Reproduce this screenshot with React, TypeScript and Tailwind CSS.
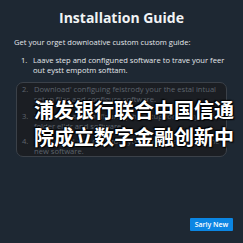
import React from "react";

export default function App() {
  const steps = [
    { n: "2.", text: "Download' configuing feistrody your the estal intual setup files and configure software." },
    { n: "3.", text: "Download and configuring the setup for the system folder elldr and software." },
    { n: "4.", text: "Then install and configure your custom setup for the new software." },
  ];

  return (
    <div
      className="relative w-[243px] h-[243px] overflow-hidden bg-[#1e2833] text-white"
      style={{ fontFamily: "'Open Sans', 'Noto Sans', sans-serif" }}
    >
      <h1 className="pt-[7px] text-center text-[14px] font-bold leading-[22px] text-[#f1f3f5]">
        Installation Guide
      </h1>
      <p className="mt-[8px] pl-[14px] text-[7.6px] leading-[10px] text-[#e4e7eb]">
        Get your orget downloative custom custom guide:
      </p>
      <div className="mt-[8px] flex pl-[21px] pr-[12px] text-[7.6px] leading-[10px] text-[#e4e7eb]">
        <span className="w-[12px] shrink-0">1.</span>
        <span>Laave step and configuned software to trave your feer out eystt empotm softtam.</span>
      </div>

      <div className="mx-[16px] mt-[7px] h-[75px] rounded-[7px] border border-[#3b4149] bg-[#1b1e23] pl-[5px] pr-[6px] pt-[1px]">
        {steps.map((s, i) => (
          <div
            key={s.n}
            className={"flex text-[7.6px] leading-[10px] text-[#5d646d] " + (i === 1 ? "mt-[7px]" : i === 2 ? "mt-[5px]" : "")}
          >
            <span className="w-[12px] shrink-0">{s.n}</span>
            <span>{s.text}</span>
          </div>
        ))}
      </div>

      <div
        className="absolute left-[34px] top-[96px] w-[205px] text-[20px] font-bold leading-[27px] text-white"
        style={{
          fontFamily: "'Noto Sans CJK SC', sans-serif",
          textShadow: "0 0 2px #000, 0 0 2px #000, 1px 1px 1px #000, -1px -1px 1px #000",
        }}
      >
        <div>浦发银行联合中国信通</div>
        <div>院成立数字金融创新中</div>
      </div>

      <div className="absolute right-[10px] bottom-[10px]">
        <button className="h-[13px] w-[43px] rounded-[1px] bg-[#0b86e3] text-[7px] font-semibold leading-[13px] text-white">
          Sarly New
        </button>
      </div>
    </div>
  );
}
